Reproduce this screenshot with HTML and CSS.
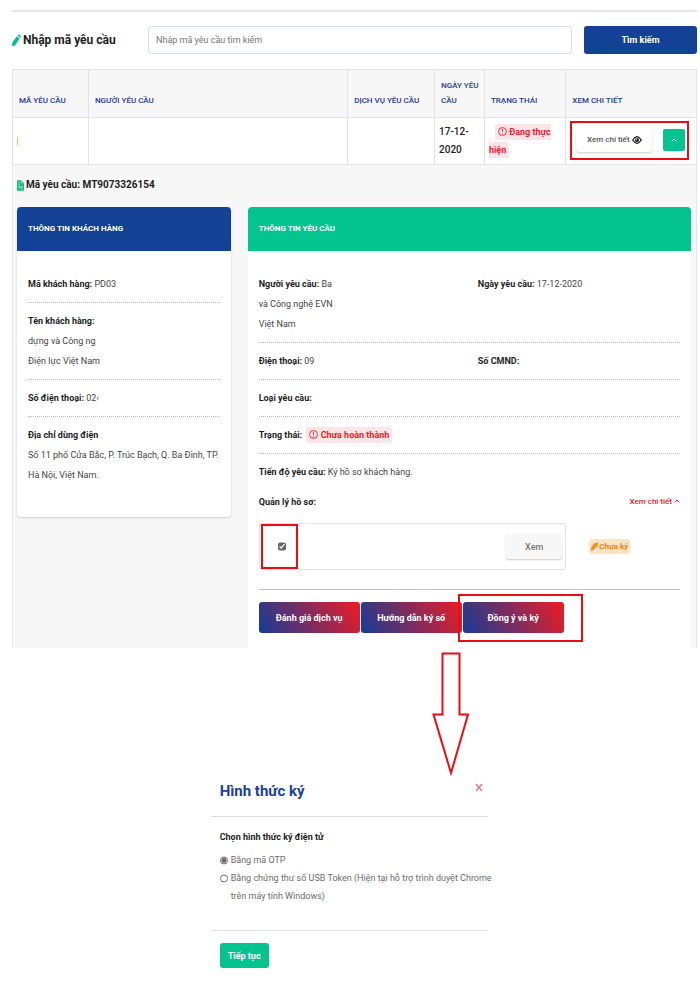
FILE: index.html
```html
<!DOCTYPE html>
<html lang="vi">
<head>
<meta charset="utf-8">
<meta name="viewport" content="width=device-width, initial-scale=1">
<title>Tra cứu yêu cầu</title>
<link rel="stylesheet" href="styles.css">
</head>
<body>
<main class="page">
  <form class="search">
    <label class="search-label" for="code">
      <svg class="icon-pencil" viewBox="0 0 10 13" aria-hidden="true"><path d="M0 13l.5-4.500L5.500 1.800l3 2.700L3.200 12zM6.200 1L7 .2c.4-.3 1-.3 1.400 0l1 .9c.5.5.6 1.200.2 1.700l-.5.9z"/></svg>
      Nhập mã yêu cầu
    </label>
    <input class="search-input" id="code" type="text" placeholder="Nhập mã yêu cầu tìm kiếm">
    <button class="btn btn-blue" type="submit">Tìm kiếm</button>
  </form>

  <table class="requests">
    <colgroup><col class="c-code"><col class="c-person"><col class="c-service"><col class="c-date"><col class="c-state"><col class="c-detail"></colgroup>
    <thead>
      <tr><th>MÃ YÊU CẦU</th><th>NGƯỜI YÊU CẦU</th><th>DỊCH VỤ YÊU CẦU</th><th>NGÀY YÊU CẦU</th><th>TRẠNG THÁI</th><th>XEM CHI TIẾT</th></tr>
    </thead>
    <tbody>
      <tr>
        <td><span class="code-mark"></span></td><td></td><td></td>
        <td class="date">17-12-2020</td>
        <td class="state"><span class="tag tag-red tag-wrap"><svg class="icon-alert" viewBox="0 0 10 10" aria-hidden="true"><circle cx="5" cy="5" r="4.400"/><path d="M5 2.200v3.400M5 6.800v1.200"/></svg> Đang thực hiện</span></td>
        <td class="actions-cell">
          <div class="actions">
            <button class="btn-light btn-view" type="button">Xem chi tiết
              <svg class="icon-eye" viewBox="0 0 10 8" aria-hidden="true"><path d="M.7 4Q5-2.600 9.300 4 5 10.600.7 4z"/><circle cx="5" cy="4" r="2"/><circle class="glint" cx="4.400" cy="3.300" r=".7"/></svg>
            </button>
            <button class="btn-toggle" type="button" aria-label="Thu gọn"><svg class="icon-up" viewBox="0 0 6 4" aria-hidden="true"><path d="M.8 3.400L3 1l2.200 2.400"/></svg></button>
          </div>
        </td>
      </tr>
    </tbody>
  </table>

  <section class="panel">
    <h2 class="panel-title">
      <svg class="icon-file" viewBox="0 0 8 13" aria-hidden="true"><path class="sheet" d="M0 .5h5L8 3.500v9H0z"/><path class="lines" d="M5 .5v3h3M1.500 3.500h2M1.500 5.500h2M2 7.500h4v1.500H2zM4.500 11h2"/></svg>
      Mã yêu cầu: MT9073326154
    </h2>
    <div class="cards">
      <article class="card">
        <h3 class="card-head head-blue">THÔNG TIN KHÁCH HÀNG</h3>
        <div class="card-body">
          <div class="row"><b>Mã khách hàng:</b> PD03</div>
          <div class="row"><b>Tên khách hàng:</b><br>dựng và Công ng<br>Điện lực Việt Nam</div>
          <div class="row"><b>Số điện thoại:</b> 02‹</div>
          <div class="row row-last"><b>Địa chỉ dùng điện</b><br>Số 11 phố Cửa Bắc, P. Trúc Bạch, Q. Ba Đình, TP. Hà Nội, Việt Nam.</div>
        </div>
      </article>

      <article class="card card-request">
        <h3 class="card-head head-green">THÔNG TIN YÊU CẦU</h3>
        <div class="card-body">
          <div class="row row-split">
            <div><b>Người yêu cầu:</b> Ba<br>và Công nghệ EVN<br>Việt Nam</div>
            <div><b>Ngày yêu cầu:</b> 17-12-2020</div>
          </div>
          <div class="row row-split">
            <div><b>Điện thoại:</b> 09</div>
            <div><b>Số CMND:</b></div>
          </div>
          <div class="row"><b>Loại yêu cầu:</b></div>
          <div class="row"><b>Trạng thái:</b> <span class="tag tag-red tag-state"><svg class="icon-alert" viewBox="0 0 10 10" aria-hidden="true"><circle cx="5" cy="5" r="4.400"/><path d="M5 2.200v3.400M5 6.800v1.200"/></svg> Chưa hoàn thành</span></div>
          <div class="row row-last"><b>Tiến độ yêu cầu:</b> Ký hồ sơ khách hàng.</div>
          <div class="files-head">
            <b>Quản lý hồ sơ:</b>
            <a class="more" href="#files">Xem chi tiết <svg class="icon-up" viewBox="0 0 6 4" aria-hidden="true"><path d="M.8 3.400L3 1l2.200 2.400"/></svg></a>
          </div>
          <div class="files" id="files">
            <div class="file">
              <label class="file-check"><input class="check" type="checkbox" checked aria-label="Chọn hồ sơ"></label>
              <button class="btn-light btn-open" type="button">Xem</button>
            </div>
            <span class="tag tag-orange"><svg class="icon-pen" viewBox="0 0 8 10" aria-hidden="true"><path d="M0 10l.6-4.500L4 1.500 7.800 0 7.500 3.500 3.800 8z"/><path class="cut" d="M2 7.800l3.500-4.500"/></svg> Chưa ký</span>
          </div>
          <div class="buttons">
            <button class="btn btn-grad" type="button">Đánh giá dịch vụ</button>
            <button class="btn btn-grad" type="button">Hướng dẫn ký số</button>
            <div class="sign"><button class="btn btn-grad" type="button">Đồng ý và ký</button></div>
          </div>
        </div>
      </article>
    </div>
  </section>

  <svg class="arrow" viewBox="0 0 38 124" aria-hidden="true"><path d="M10.500 1.500h17v61h8.500L19 121 1.500 62.500h9z"/></svg>

  <form class="dialog">
    <header class="dialog-head">
      <h2 class="dialog-title">Hình thức ký</h2>
      <button class="close" type="button" aria-label="Đóng"><svg class="icon-close" viewBox="0 0 8 8" aria-hidden="true"><path d="M1 .5l6 7M7 .5l-6 7"/></svg></button>
    </header>
    <fieldset class="dialog-body">
      <legend class="legend">Chọn hình thức ký điện tử</legend>
      <label class="option"><input class="radio" type="radio" name="method" checked><span>Bằng mã OTP</span></label>
      <label class="option"><input class="radio" type="radio" name="method"><span>Bằng chứng thư số USB Token (Hiện tại hỗ trợ trình duyệt Chrome<br>trên máy tính Windows)</span></label>
    </fieldset>
    <footer class="dialog-foot"><button class="btn btn-green" type="submit">Tiếp tục</button></footer>
  </form>
</main>
</body>
</html>
```
FILE: styles.css
```css
* { box-sizing: border-box; }

body {
  margin: 0;
  background: #fff;
  color: #444;
  font: 9px/20px Roboto, "Liberation Sans", sans-serif;
}

button, input { font: inherit; }
button { padding: 0; border: 0; cursor: pointer; }
h2, h3 { margin: 0; }
b { color: #1c1e22; font-weight: 700; }
svg { flex: none; fill: none; }

.page { padding: 10px 3px 0 12px; }

/* Search bar */
.search {
  display: grid;
  grid-template-columns: 124px 1fr 113px;
  column-gap: 12px;
  align-items: center;
  padding: 14px 0 15px;
  border-top: 2px solid #e5e5e5;
}
.search-label {
  display: flex;
  align-items: center;
  gap: 2px;
  color: #1c1e22;
  font-size: 12px;
  font-weight: 700;
  white-space: nowrap;
}
.icon-pencil { width: 9px; height: 13px; fill: #0b9; }
.search-input {
  width: 100%;
  height: 28px;
  padding: 0 7px;
  border: 1px solid #d8dde3;
  border-radius: 3px;
  color: #444;
}
.search-input::placeholder { color: #757575; }

.btn {
  border-radius: 3px;
  color: #fff;
  font-weight: 700;
  white-space: nowrap;
}
.btn-blue { height: 28px; background: #124196; }

/* Request table */
.requests {
  width: 100%;
  border-collapse: collapse;
  table-layout: fixed;
}
.c-code { width: 11.1%; }
.c-person { width: 37.9%; }
.c-service { width: 12.7%; }
.c-date { width: 7.3%; }
.c-state { width: 11.9%; }
.requests th, .requests td { border: 1px solid #e1e4e8; text-align: left; }
.requests th {
  height: 48px;
  padding: 8px 2px 9px 6px;
  background: #f7f7f7;
  color: #1a3c96;
  font-size: 8px;
  font-weight: 500;
  line-height: 15px;
  vertical-align: bottom;
}
.requests td { height: 47px; padding: 4px; }
.code-mark { display: block; width: 1px; height: 8px; background: #ffb866; }
.requests .date { color: #222; font-size: 10px; font-weight: 500; line-height: 18px; }
.requests .state { line-height: 18px; }

.tag { padding: 3px; border-radius: 3px; font-weight: 700; }
.tag-red { background: #fde5e7; color: #ee1c2c; }
.tag-wrap { margin-left: 6px; }
.tag-state { margin-left: 2px; }
.tag-orange {
  display: flex;
  align-items: center;
  gap: 1px;
  padding: 0 2px;
  background: #ffe3c2;
  color: #f5820b;
  font-size: 8px;
  line-height: 15px;
}
.icon-alert { width: 9px; height: 9px; vertical-align: -1px; stroke: currentColor; }
.icon-pen { width: 7px; height: 9px; fill: currentColor; }
.icon-pen .cut { stroke: #ffe3c2; stroke-width: 0.5; }

.actions {
  display: flex;
  align-items: center;
  justify-content: space-between;
  height: 39px;
  padding: 0 2px 0 4px;
  border: 2px solid #ee0c14;
}
.requests .actions-cell { padding: 2px 7px 4px 4px; }
.btn-light {
  border-radius: 3px;
  background: #fff;
  box-shadow: 0 1px 2px #ccc;
  color: #555;
  font-weight: 500;
}
.btn-view {
  display: flex;
  align-items: center;
  justify-content: center;
  gap: 2px;
  width: 76px;
  height: 23px;
  font-size: 8px;
}
.icon-eye { width: 10px; height: 8px; stroke: #111; stroke-width: 1.2; }
.icon-eye circle { fill: #111; stroke: none; }
.icon-eye .glint { fill: #fff; }
.btn-toggle { width: 22px; height: 22px; border-radius: 2px; background: #03c48f; color: #fff; line-height: 0; }
.icon-up { width: 6px; height: 4px; stroke: currentColor; }

/* Request details */
.panel {
  padding: 10px 5px 0 4px;
  border: 1px solid #e8e8e8;
  border-width: 0 1px;
  background: #f7f7f7;
}
.panel-title {
  display: flex;
  align-items: center;
  gap: 2px;
  margin-bottom: 12px;
  color: #1c1e22;
  font-size: 10px;
  font-weight: 700;
}
.icon-file { width: 7px; height: 13px; }
.icon-file .sheet { fill: #15bd82; }
.icon-file .lines { stroke: #b8f0da; stroke-width: 0.7; }
.cards {
  display: grid;
  grid-template-columns: 214fr 444fr;
  column-gap: 17px;
  align-items: start;
}
.card {
  padding-bottom: 30px;
  border-radius: 4px;
  background: #fff;
  box-shadow: 0 1px 2px #ccc;
}
.card-request { padding-bottom: 15px; border-radius: 4px 4px 0 0; box-shadow: none; }
.card-head {
  padding: 12px 11px;
  border-radius: 4px 4px 0 0;
  color: #fff;
  font-size: 8px;
  font-weight: 700;
}
.head-blue { background: #124196; }
.head-green { background: #03c48f; }
.card-body { padding: 15px 11px 0; }
.row { padding: 8px 0; border-bottom: 1px dotted #bbb; }
.row-last { border: 0; padding-bottom: 2px; }
.row-split { display: grid; grid-template-columns: 219fr 202fr; }

.files-head {
  display: flex;
  justify-content: space-between;
  margin: 8px 0 11px;
}
.more { color: #ee1c25; font-size: 8px; font-weight: 500; text-decoration: none; }
.more .icon-up { vertical-align: 1px; }
.files { display: flex; align-items: center; gap: 23px; padding-bottom: 19px; border-bottom: 1px solid #c4c4c4; }
.file {
  display: flex;
  flex: 0 0 73%;
  align-items: center;
  justify-content: space-between;
  height: 47px;
  padding: 0 3px 0 1px;
  border: 1px solid #dfe3e7;
  border-radius: 3px;
}
.file-check {
  display: grid;
  place-items: center;
  width: 37px;
  height: 45px;
  border: 2px solid #ee0c14;
  background: #fff;
}
.check { width: 8px; height: 9px; margin: 0 0 0 5px; accent-color: #666; }
.btn-open { width: 56px; height: 25px; background: #f7f7f7; color: #777; }

.buttons { display: flex; gap: 1px; padding-top: 12px; }
.btn-grad {
  width: 101px;
  height: 31px;
  background: linear-gradient(60deg, #143c96, #ed1c24);
}
.sign { position: relative; }
.sign::after {
  content: "";
  position: absolute;
  inset: -8px -19px -9px -5px;
  border: 2px solid #ee0c14;
  pointer-events: none;
}

.arrow {
  display: block;
  width: 38px;
  height: 124px;
  margin: 4px auto 0 61.3%;
  stroke: #ee0c14;
  stroke-width: 2;
}

/* Signing method */
.dialog { width: 277px; margin-left: 29%; }
.dialog-head {
  display: flex;
  justify-content: space-between;
  padding: 3px 4px 13px 9px;
  border-bottom: 1px solid #ddd;
}
.dialog-title { color: #1a4198; font-size: 15px; font-weight: 700; line-height: 24px; }
.close { display: grid; place-items: center; width: 9px; height: 16px; background: none; }
.icon-close { width: 8px; height: 9px; stroke: #f4747c; stroke-width: 1.5; }
.dialog-body {
  min-width: 0;
  margin: 0;
  padding: 11px 0 25px 9px;
  border: 0;
  border-bottom: 1px solid #ddd;
  line-height: 18px;
}
.legend { float: left; width: 100%; margin-bottom: 5px; padding: 0; color: #1c1e22; font-weight: 700; }
.option { display: flex; clear: both; gap: 3px; color: #6c6c6c; white-space: nowrap; }
.radio { flex: none; width: 8px; height: 9px; margin: 5px 0 0; accent-color: #666; }
.dialog-foot { padding: 12px 9px; }
.btn-green { width: 49px; height: 25px; background: #03c48f; }
```
